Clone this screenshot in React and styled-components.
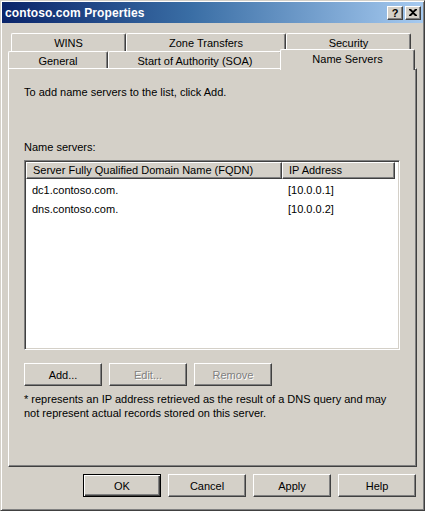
import React from "react";
import styled, { createGlobalStyle, css } from "styled-components";

const GlobalStyle = createGlobalStyle`
  html, body {
    margin: 0;
    padding: 0;
    background: #d4d0c8;
  }
  body {
    font-family: "Liberation Sans", Arial, sans-serif;
    font-size: 11px;
    color: #000;
  }
`;

const raised = css`
  border-style: solid;
  border-width: 1px;
  border-color: #ffffff #404040 #404040 #ffffff;
  box-shadow: inset -1px -1px 0 #808080;
`;

const backTabs = [
  { label: "WINS", width: 115 },
  { label: "Zone Transfers", width: 160 },
  { label: "Security", width: 125 },
];

const frontTabs = [
  { label: "General", width: 100 },
  { label: "Start of Authority (SOA)", width: 174 },
  { label: "Name Servers", width: 131, selected: true },
];

const servers = [
  { name: "dc1.contoso.com.", ip: "[10.0.0.1]" },
  { name: "dns.contoso.com.", ip: "[10.0.0.2]" },
];

const App = () => {
  return (
    <>
      <GlobalStyle />
      <Window>
        <TitleBar>
          <TitleText>contoso.com Properties</TitleText>
          <CaptionButtons>
            <CaptionButton>?</CaptionButton>
            <CaptionButton>
              <svg width="8" height="7" viewBox="0 0 8 7">
                <path
                  d="M0 0h2l2 2 2-2h2v1L5 3.5 8 6v1H6L4 5 2 7H0V6l3-2.5L0 1z"
                  fill="#000"
                />
              </svg>
            </CaptionButton>
          </CaptionButtons>
        </TitleBar>

        <Content>
          <TabRow indent='3px'>
            {backTabs.map((t) => (
              <Tab key={t.label} width={t.width}>
                {t.label}
              </Tab>
            ))}
          </TabRow>
          <TabRow front>
            {frontTabs.map((t) => (
              <Tab key={t.label} width={t.width} selected={t.selected} front>
                {t.label}
              </Tab>
            ))}
          </TabRow>

          <Panel>
            <Text>To add name servers to the list, click Add.</Text>
            <Label>Name servers:</Label>
            <ListBox>
              <HeaderRow>
                <HeaderCell width='256px'>
                  Server Fully Qualified Domain Name (FQDN)
                </HeaderCell>
                <HeaderCell width='113px'>IP Address</HeaderCell>
              </HeaderRow>
              {servers.map((s) => (
                <Row key={s.name}>
                  <Cell width='256px'>{s.name}</Cell>
                  <Cell width='113px'>{s.ip}</Cell>
                </Row>
              ))}
            </ListBox>
            <ButtonRow>
              <Button>Add...</Button>
              <Button disabled>Edit...</Button>
              <Button disabled>Remove</Button>
            </ButtonRow>
            <Note>
              * represents an IP address retrieved as the result of a DNS query
              and may not represent actual records stored on this server.
            </Note>
          </Panel>

          <Footer>
            <Button isDefault>OK</Button>
            <Button>Cancel</Button>
            <Button>Apply</Button>
            <Button>Help</Button>
          </Footer>
        </Content>
      </Window>
    </>
  );
};

export default App;

const Window = styled.div`
  width: 425px;
  height: 511px;
  box-sizing: border-box;
  background: #d4d0c8;
  border-style: solid;
  border-width: 1px;
  border-color: #d4d0c8 #404040 #404040 #d4d0c8;
  box-shadow: inset 1px 1px 0 #ffffff, inset -1px -1px 0 #808080;
  padding: 1px 1px 0 1px;
  display: flex;
  flex-direction: column;
`;

const TitleBar = styled.div`
  height: 21px;
  flex-shrink: 0;
  display: flex;
  align-items: center;
  justify-content: space-between;
  padding: 0 2px 0 3px;
  background: linear-gradient(to right, #0a246a 0%, #3a6ea5 45%, #a6caf0 100%);
`;

const TitleText = styled.div`
  color: #ffffff;
  font-weight: bold;
  font-size: 12px;
  letter-spacing: 0.1px;
`;

const CaptionButtons = styled.div`
  display: flex;
  gap: 2px;
`;

const CaptionButton = styled.div`
  width: 14px;
  height: 12px;
  background: #d4d0c8;
  ${raised};
  display: flex;
  align-items: center;
  justify-content: center;
  font-weight: bold;
  font-size: 11px;
  line-height: 12px;
`;

const Content = styled.div`
  flex: 1;
  display: flex;
  flex-direction: column;
  padding: 10px 6px 0 6px;
`;

const TabRow = styled.div`
  display: flex;
  align-items: flex-end;
  height: ${({ front }) => (front ? "17px" : "18px")};
  padding-left: ${({ indent }) => indent || "0"};
`;

const Tab = styled.div`
  box-sizing: border-box;
  width: ${({ width }) => width}px;
  height: ${({ front }) => (front ? "17px" : "18px")};
  flex-shrink: 0;
  background: #d4d0c8;
  border-top: 1px solid #ffffff;
  border-left: 1px solid #ffffff;
  border-right: 1px solid #404040;
  box-shadow: inset -1px 0 0 #808080;
  border-radius: 2px 2px 0 0;
  text-align: center;
  line-height: ${({ front }) => (front ? "19px" : "18px")};
  white-space: nowrap;

  ${({ selected }) =>
    selected &&
    css`
      position: relative;
      z-index: 1;
      height: 21px;
      margin: 0 -2px -2px -2px;
      width: ${({ width }) => width + 4}px;
      line-height: 19px;
    `}
`;

const Panel = styled.div`
  box-sizing: border-box;
  height: 399px;
  flex-shrink: 0;
  background: #d4d0c8;
  ${raised};
  border-top-color: #ffffff;
  padding: 17px 16px 0 15px;
  display: flex;
  flex-direction: column;
`;

const Text = styled.div`
  line-height: 13px;
`;

const Label = styled.div`
  line-height: 13px;
  margin-top: 42px;
`;

const ListBox = styled.div`
  box-sizing: border-box;
  height: 190px;
  margin-top: 6px;
  background: #ffffff;
  border-style: solid;
  border-width: 1px;
  border-color: #808080 #ffffff #ffffff #808080;
  box-shadow: inset 1px 1px 0 #404040, inset -1px -1px 0 #d4d0c8;
  padding: 1px;
  overflow: hidden;
`;

const HeaderRow = styled.div`
  display: flex;
  height: 17px;
  margin-bottom: 1px;
`;

const HeaderCell = styled.div`
  box-sizing: border-box;
  width: ${({ width }) => width};
  background: #d4d0c8;
  ${raised};
  padding-left: 6px;
  line-height: 15px;
  white-space: nowrap;
  overflow: hidden;
`;

const Row = styled.div`
  display: flex;
  height: 19px;
  align-items: center;
`;

const Cell = styled.div`
  width: ${({ width }) => width};
  padding-left: 6px;
  box-sizing: border-box;
  white-space: nowrap;
`;

const ButtonRow = styled.div`
  display: flex;
  gap: 7px;
  margin-top: 13px;
`;

const Button = styled.button`
  box-sizing: border-box;
  width: 78px;
  height: 23px;
  padding: 0;
  font-family: "Liberation Sans", Arial, sans-serif;
  font-size: 11px;
  color: #000000;
  background: #d4d0c8;
  ${raised};

  &:disabled {
    color: #808080;
    text-shadow: 1px 1px 0 #ffffff;
  }

  ${({ isDefault }) =>
    isDefault &&
    css`
      border-color: #000000;
      box-shadow: inset 1px 1px 0 #ffffff, inset -1px -1px 0 #404040,
        inset -2px -2px 0 #808080;
    `}
`;

const Note = styled.div`
  margin-top: 7px;
  line-height: 13.5px;
`;

const Footer = styled.div`
  display: flex;
  justify-content: flex-end;
  gap: 7px;
  margin-top: 7px;
  padding-right: 1px;
`;
